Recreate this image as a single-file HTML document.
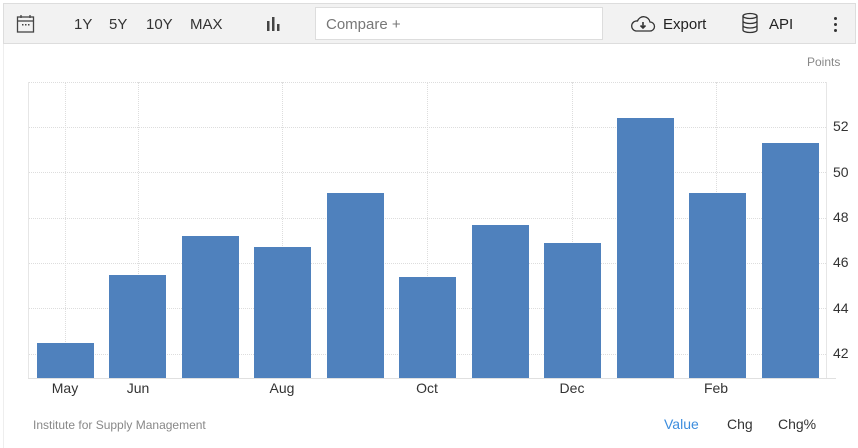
<!DOCTYPE html>
<html><head><meta charset="utf-8"><style>
body{margin:0;width:858px;height:448px;background:#fff;font-family:"Liberation Sans",sans-serif;position:relative;overflow:hidden}
.a{position:absolute}
.tb{left:3px;top:3px;width:853px;height:41px;background:#f2f2f2;border:1px solid #ddd;box-sizing:border-box}
.t{font-size:15px;color:#333}
.bar{position:absolute;background:#4f81bd;width:57px;bottom:70px}
.yl{position:absolute;left:833px;font-size:14px;color:#333}
.xl{position:absolute;top:380px;font-size:14px;color:#333;transform:translateX(-50%)}
.hg{position:absolute;left:28px;width:798px;border-top:1px dotted #ddd}
.vg{position:absolute;top:82px;height:296px;border-left:1px dotted #ddd}
</style></head><body>
<div class="a" style="left:3px;top:43px;width:1px;height:405px;background:#eee"></div>
<div class="a tb"></div>
<svg class="a" style="left:16px;top:14px" width="20" height="20" viewBox="0 0 20 20" fill="none" stroke="#444" stroke-width="1.3"><rect x="1.5" y="3" width="16" height="15"/><line x1="1.5" y1="7" x2="17.5" y2="7"/><line x1="5" y1="1" x2="5" y2="4"/><line x1="14" y1="1" x2="14" y2="4"/><g fill="#444" stroke="none"><rect x="6" y="10" width="1.5" height="1.5"/><rect x="9" y="10" width="1.5" height="1.5"/><rect x="12" y="10" width="1.5" height="1.5"/></g></svg>
<div class="a t" style="left:74px;top:16px">1Y</div>
<div class="a t" style="left:109px;top:16px">5Y</div>
<div class="a t" style="left:146px;top:16px">10Y</div>
<div class="a t" style="left:190px;top:16px">MAX</div>
<svg class="a" style="left:266px;top:16px" width="16" height="16"><rect x="1" y="5" width="2.5" height="10" fill="#444"/><rect x="6" y="1" width="2.5" height="14" fill="#444"/><rect x="11" y="8" width="2.5" height="7" fill="#444"/></svg>
<div class="a" style="left:315px;top:7px;width:288px;height:33px;background:#fff;border:1px solid #ddd;box-sizing:border-box"></div>
<div class="a" style="left:326px;top:16px;font-size:15px;color:#777">Compare +</div>
<svg class="a" style="left:630px;top:14px" width="26" height="20" viewBox="0 0 26 20" fill="none" stroke="#333" stroke-width="1.3"><path d="M6 17H20a4.5 4.5 0 0 0 0-9 6.5 6.5 0 0 0-12.5-1A5 5 0 0 0 6 17z"/><path d="M13 8v6M10.5 11.5L13 14l2.5-2.5" stroke-width="1.6"/></svg>
<div class="a t" style="left:663px;top:16px;color:#222">Export</div>
<svg class="a" style="left:741px;top:12px" width="18" height="22" viewBox="0 0 18 22" fill="none" stroke="#333" stroke-width="1.3"><ellipse cx="9" cy="4" rx="7" ry="2.5"/><path d="M2 4v14c0 1.4 3 2.5 7 2.5s7-1.1 7-2.5V4M2 9c0 1.4 3 2.5 7 2.5S16 10.4 16 9M2 13.5c0 1.4 3 2.5 7 2.5s7-1.1 7-2.5"/></svg>
<div class="a t" style="left:769px;top:16px;color:#222">API</div>
<div class="a" style="left:834px;top:17px;width:4px"><div style="width:3px;height:3px;border-radius:2px;background:#333;margin-bottom:3px"></div><div style="width:3px;height:3px;border-radius:2px;background:#333;margin-bottom:3px"></div><div style="width:3px;height:3px;border-radius:2px;background:#333"></div></div>
<div class="a" style="left:807px;top:55px;font-size:12px;color:#888">Points</div>
<div class="hg" style="top:82px"></div>
<div class="hg" style="top:127px"></div><div class="hg" style="top:172px"></div><div class="hg" style="top:218px"></div><div class="hg" style="top:263px"></div><div class="hg" style="top:308px"></div><div class="hg" style="top:354px"></div>
<div class="vg" style="left:65px"></div><div class="vg" style="left:138px"></div><div class="vg" style="left:282px"></div><div class="vg" style="left:427px"></div><div class="vg" style="left:572px"></div><div class="vg" style="left:716px"></div>
<div class="a" style="left:28px;top:82px;width:1px;height:296px;background:#e6e6e6"></div>
<div class="a" style="left:826px;top:82px;width:1px;height:297px;background:#e6e6e6"></div>
<div class="a" style="left:28px;top:378px;width:808px;height:1px;background:#e0e0e0"></div>
<div class="bar" style="left:37px;top:343px"></div>
<div class="bar" style="left:109px;top:275px"></div>
<div class="bar" style="left:182px;top:236px"></div>
<div class="bar" style="left:254px;top:247px"></div>
<div class="bar" style="left:327px;top:193px"></div>
<div class="bar" style="left:399px;top:277px"></div>
<div class="bar" style="left:472px;top:225px"></div>
<div class="bar" style="left:544px;top:243px"></div>
<div class="bar" style="left:617px;top:118px"></div>
<div class="bar" style="left:689px;top:193px"></div>
<div class="bar" style="left:762px;top:143px"></div>
<div class="yl" style="top:118px">52</div><div class="yl" style="top:164px">50</div><div class="yl" style="top:209px">48</div><div class="yl" style="top:254px">46</div><div class="yl" style="top:300px">44</div><div class="yl" style="top:345px">42</div>
<div class="xl" style="left:65px">May</div><div class="xl" style="left:138px">Jun</div><div class="xl" style="left:282px">Aug</div><div class="xl" style="left:427px">Oct</div><div class="xl" style="left:572px">Dec</div><div class="xl" style="left:716px">Feb</div>
<div class="a" style="left:33px;top:418px;font-size:12px;color:#888">Institute for Supply Management</div>
<div class="a" style="left:664px;top:416px;font-size:14px;color:#3c8dde">Value</div>
<div class="a" style="left:727px;top:416px;font-size:14px;color:#333">Chg</div>
<div class="a" style="left:778px;top:416px;font-size:14px;color:#333">Chg%</div>
</body></html>
